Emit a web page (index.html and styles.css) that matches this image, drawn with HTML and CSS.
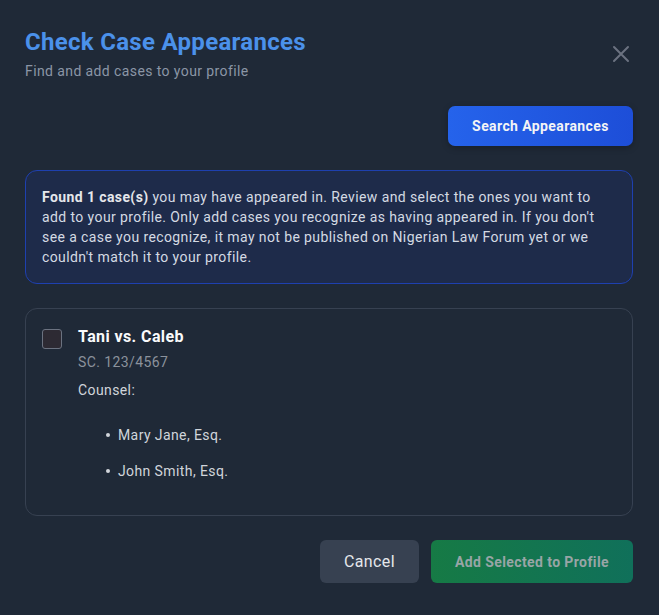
FILE: index.html
```html
<!DOCTYPE html>
<html>
<head>
<meta charset="utf-8">
<link rel="stylesheet" href="styles.css">
</head>
<body>
<div class="modal">
  <div class="header">
    <div class="titles">
      <h1 class="title">Check Case Appearances</h1>
      <p class="subtitle">Find and add cases to your profile</p>
    </div>
    <button class="close" aria-label="Close">
      <svg width="18" height="18" viewBox="0 0 18 18"><path d="M2 2L16 16M16 2L2 16" stroke="#6b7280" stroke-width="2" stroke-linecap="round"/></svg>
    </button>
  </div>
  <div class="search-row">
    <button class="btn-search">Search Appearances</button>
  </div>
  <div class="info">
    <strong>Found 1 case(s)</strong> you may have appeared in. Review and select the ones you want to add to your profile. Only add cases you recognize as having appeared in. If you don't see a case you recognize, it may not be published on Nigerian Law Forum yet or we couldn't match it to your profile.
  </div>
  <div class="case">
    <span class="checkbox"></span>
    <div class="case-body">
      <div class="case-title">Tani vs. Caleb</div>
      <div class="case-no">SC. 123/4567</div>
      <div class="counsel">Counsel:</div>
      <ul class="counsel-list">
        <li>Mary Jane, Esq.</li>
        <li>John Smith, Esq.</li>
      </ul>
    </div>
  </div>
  <div class="actions">
    <button class="btn-cancel">Cancel</button>
    <button class="btn-add">Add Selected to Profile</button>
  </div>
</div>
</body>
</html>
```
FILE: styles.css
```css
* { box-sizing: border-box; }
html, body { margin: 0; padding: 0; background: #1f2937; }
body { font-family: Roboto, "Noto Sans", "Liberation Sans", sans-serif; color: #d1d5db; width: 659px; height: 615px; overflow: hidden; letter-spacing: 0.4px; }
button { letter-spacing: 0.4px; }
.modal { padding: 28px 26px 0 25px; }
.header { display: flex; justify-content: space-between; align-items: flex-start; }
.title { margin: 0; font-size: 24px; line-height: 28px; font-weight: 700; color: #4b91ea; letter-spacing: 0.3px; }
.subtitle { margin: 5px 0 0; font-size: 14px; line-height: 20px; color: #8b96a6; }
.close { background: none; border: 0; padding: 0; margin: 17px 3px 0 0; width: 18px; height: 18px; cursor: pointer; display: block; }
.close svg { display: block; }
.search-row { display: flex; justify-content: flex-end; margin-top: 25px; }
.btn-search { height: 40px; width: 185px; border: 0; border-radius: 7px; background: linear-gradient(90deg, #2563eb, #1d4ed8); color: #f3f4f6; font-family: inherit; font-size: 14px; font-weight: 700; box-shadow: 0 2px 6px rgba(0,0,0,0.25); }
.info { margin-top: 24px; border: 1px solid #1e40af; border-radius: 12px; background: #1e2b4a; padding: 16px; font-size: 14px; line-height: 20px; color: #d4dae3; }
.info strong { color: #e5e7eb; }
.case { margin-top: 24px; border: 1px solid #374151; border-radius: 12px; padding: 16px 16px 17px; display: flex; gap: 16px; }
.checkbox { flex: none; width: 20px; height: 20px; margin-top: 4px; border: 1px solid #6b7280; border-radius: 3px; background: #2d2a33; }
.case-title { font-size: 16px; line-height: 24px; font-weight: 700; color: #f9fafb; }
.case-no { margin-top: 3px; font-size: 14px; line-height: 20px; color: #8b929c; }
.counsel { margin-top: 8px; font-size: 14px; line-height: 20px; color: #d1d5db; }
.counsel-list { list-style: none; margin: 25px 0 17px; padding-left: 40px; font-size: 14px; line-height: 20px; color: #d1d5db; }
.counsel-list li::before { content: ""; display: inline-block; width: 4px; height: 4px; border-radius: 50%; background: #d1d5db; margin-left: -12px; margin-right: 8px; vertical-align: middle; position: relative; top: -1px; }
.counsel-list li + li { margin-top: 16px; }
.actions { display: flex; justify-content: flex-end; gap: 12px; margin-top: 24px; }
.btn-cancel { height: 43px; width: 99px; border: 0; border-radius: 6px; background: #374151; color: #e5e7eb; font-family: inherit; font-size: 16px; }
.btn-add { height: 43px; width: 202px; border: 0; border-radius: 6px; background: linear-gradient(90deg, #167a45, #10705a); color: #98a5a6; font-family: inherit; font-size: 14px; font-weight: 700; }
```
